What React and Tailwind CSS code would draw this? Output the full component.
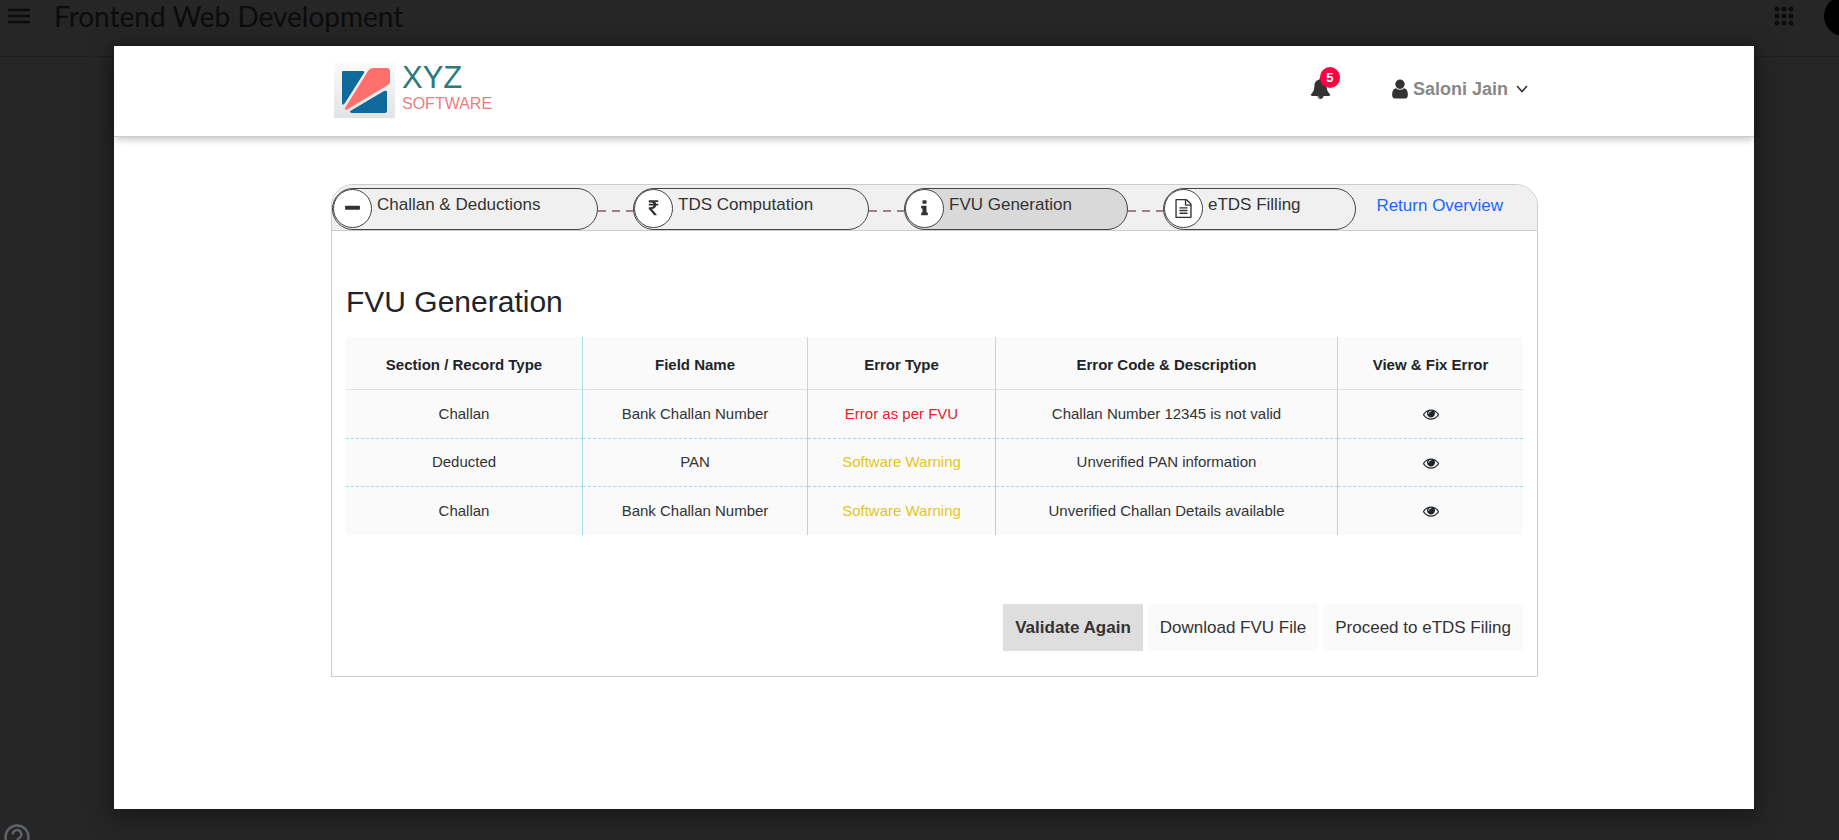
const ICONS = {
  eye: "M1664 960q-152-236-381-353 61 104 61 225 0 185-131.5 316.5t-316.5 131.5-316.5-131.5-131.5-316.5q0-121 61-225-229 117-381 353 133 205 333.5 326.5t434.5 121.5 434.5-121.5 333.5-326.5zm-720-384q0-20-14-34t-34-14q-125 0-214.5 89.5t-89.5 214.5q0 20 14 34t34 14 34-14 14-34q0-86 61-147t147-61q20 0 34-14t14-34zm848 384q0 34-20 69-140 230-376.5 368.5t-499.5 138.5-499.5-139-376.5-368q-20-35-20-69t20-69q140-229 376.5-368t499.5-139 499.5 139 376.5 368q20 35 20 69z",
  user: "M1536 1399q0 109-62.5 187t-150.5 78h-854q-88 0-150.5-78t-62.5-187q0-85 8.5-160.5t31.5-152 58.5-131 94-89 134.5-34.5q131 128 313 128t313-128q76 0 134.5 34.5t94 89 58.5 131 31.5 152 8.5 160.5zm-256-887q0 159-112.5 271.5t-271.5 112.5-271.5-112.5-112.5-271.5 112.5-271.5 271.5-112.5 271.5 112.5 112.5 271.5z",
  file: "M1596 380q28 28 48 76t20 88v1152q0 40-28 68t-68 28h-1344q-40 0-68-28t-28-68v-1600q0-40 28-68t68-28h896q40 0 88 20t76 48zm-444-244v376h376q-10-29-22-41l-313-313q-12-12-41-22zm384 1528v-1024h-416q-40 0-68-28t-28-68v-416h-768v1536h1280zm-1024-864q0-14 9-23t23-9h704q14 0 23 9t9 23v64q0 14-9 23t-23 9h-704q-14 0-23-9t-9-23v-64zm736 224q14 0 23 9t9 23v64q0 14-9 23t-23 9h-704q-14 0-23-9t-9-23v-64q0-14 9-23t23-9h704zm0 256q14 0 23 9t9 23v64q0 14-9 23t-23 9h-704q-14 0-23-9t-9-23v-64q0-14 9-23t23-9h704z",
  info: "M1216 1344v128q0 26-19 45t-45 19h-512q-26 0-45-19t-19-45v-128q0-26 19-45t45-19h64v-384h-64q-26 0-45-19t-19-45v-128q0-26 19-45t45-19h384q26 0 45 19t19 45v576h64q26 0 45 19t19 45zm-128-1152v192q0 26-19 45t-45 19h-256q-26 0-45-19t-19-45v-192q0-26 19-45t45-19h256q26 0 45 19t19 45z",
  rupee: "M1345 470v102q0 14-9 23t-23 9h-168q-23 144-129 234t-276 110q167 178 459 536 14 16 4 34-8 18-29 18h-195q-16 0-25-12-306-367-498-571-9-9-9-22v-127q0-13 9.5-22.5t22.5-9.5h112q132 0 212.5-43t102.5-125h-427q-14 0-23-9t-9-23v-102q0-14 9-23t23-9h413q-57-113-268-113h-145q-13 0-22.5-9.5t-9.5-22.5v-133q0-14 9-23t23-9h832q14 0 23 9t9 23v102q0 14-9 23t-23 9h-233q47 61 64 144h171q14 0 23 9t9 23z",
  minus: "M1600 736v192q0 40-28 68t-68 28h-1216q-40 0-68-28t-28-68v-192q0-40 28-68t68-28h1216q40 0 68 28t28 68z",
  bell: "M912 1696q0-16-16-16-59 0-101.5-42.5t-42.5-101.5q0-16-16-16t-16 16q0 73 51.5 124.5t124.5 51.5q16 0 16-16zm816-288q0 52-38 90t-90 38h-448q0 106-75 181t-181 75-181-75-75-181h-448q-52 0-90-38t-38-90q50-42 91-88t85-119.5 74.5-158.5 50-206 19.5-260q0-152 117-282.5t307-158.5q-8-19-8-39 0-40 28-68t68-28 68 28 28 68q0 20-8 39 190 28 307 158.5t117 282.5q0 139 19.5 260t50 206 74.5 158.5 85 119.5 91 88z",
};

function Icon({ name, className }) {
  return (
    <svg viewBox="0 0 1792 1792" fill="currentColor" aria-hidden="true" className={className}>
      <path d={ICONS[name]} />
    </svg>
  );
}

function Logo() {
  return (
    <a href="#home" className="flex items-start gap-[7px]">
      <svg viewBox="0 0 61 56" className="h-14 w-[61px]" aria-hidden="true">
        <defs>
          <linearGradient id="tile" x1="0" y1="0" x2="0" y2="1">
            <stop offset="0" stopColor="#fbfbfb" />
            <stop offset="1" stopColor="#e2e3e5" />
          </linearGradient>
        </defs>
        <rect width="61" height="56" fill="url(#tile)" />
        <path d="M9 9h20q2 0 1 2L11 41q-3 4-3-1V10q0-1 1-1z" fill="#0f6a9b" />
        <path d="M39 6h15l2 2v12q0 2-2 3L14 47q-4 2-3-1L34 9q2-3 5-3z" fill="#ff6f6b" />
        <path d="M50 29q3-1 3 1v19q0 2-2 2H18q-4-1 0-3z" fill="#0f6a9b" />
      </svg>
      <span className="flex flex-col pt-[2px]">
        <span className="text-[31px] leading-7 text-[#2c7a7d]">XYZ</span>
        <span className="pt-[2px] text-base leading-5 text-[#f07c80]">SOFTWARE</span>
      </span>
    </a>
  );
}

function Step({ icon, label, className }) {
  return (
    <li className={`flex h-[42px] shrink-0 rounded-full border border-[#444] ${className}`}>
      <button type="button" className="flex items-start gap-[5px]">
        <span className="flex h-[39px] w-[39px] items-center justify-center rounded-full border border-[#444] bg-white">
          <Icon name={icon} className="size-[19px]" />
        </span>
        <span className="pt-1 leading-6">{label}</span>
      </button>
    </li>
  );
}

function Connector() {
  return (
    <li aria-hidden="true" className="w-[35px] shrink-0 pt-1">
      <svg viewBox="0 0 35 2" className="h-[2px] w-[35px]">
        <path d="M0 1H35" stroke="#a08083" strokeWidth="2" strokeDasharray="8 6" />
      </svg>
    </li>
  );
}

const ROWS = [
  ["Challan", "Bank Challan Number", "Error as per FVU", "Challan Number 12345 is not valid"],
  ["Deducted", "PAN", "Software Warning", "Unverified PAN information"],
  ["Challan", "Bank Challan Number", "Software Warning", "Unverified Challan Details available"],
];

const HEADS = [
  ["Section / Record Type", "w-[237px]"],
  ["Field Name", "w-[225px]"],
  ["Error Type", "w-[188px]"],
  ["Error Code & Description", "w-[342px]"],
  ["View & Fix Error", "w-[185px]"],
];

export default function App() {
  return (
    <div className="relative h-screen overflow-hidden bg-[#262626] font-['Liberation_Sans',Arial,sans-serif] text-[#333]">
      <header className="flex h-[57px] items-start border-b border-[#1f1f1f] pl-2 text-[#0c0c0c]">
        <button type="button" aria-label="Main menu" className="pt-2">
          <svg viewBox="0 0 22 16" className="h-4 w-[22px]" stroke="currentColor" strokeWidth="2.4">
            <path d="M0 2H22M0 8H22M0 14H22" />
          </svg>
        </button>
        <h1 className="pl-6 font-['Lato',sans-serif] text-[28px] leading-8">Frontend Web Development</h1>
        <button type="button" aria-label="Apps" className="ml-auto pt-[6px]">
          <svg viewBox="0 0 20 20" className="h-5 w-5" fill="currentColor">
            {[3, 10, 17].map((y) => [3, 10, 17].map((x) => <circle key={`${x}-${y}`} cx={x} cy={y} r="2.5" />))}
          </svg>
        </button>
        <button type="button" aria-label="Account" className="-mt-1 -mr-[25px] ml-[30px] size-10 rounded-full bg-black" />
      </header>

      <button type="button" aria-label="Help" className="absolute top-[824px] left-1 text-[#5f6368]">
        <svg viewBox="0 0 26 26" className="size-[26px]" fill="none" stroke="currentColor" strokeWidth="2.4">
          <circle cx="13" cy="13" r="11.5" />
          <path d="M8.700 10.500a4.300 4.300 0 1 1 6.500 3.600c-1.500 1-2.200 1.700-2.200 3.400" />
        </svg>
      </button>

      <main role="dialog" aria-label="FVU Generation" className="absolute inset-x-0 top-[46px] mr-[85px] ml-[114px] h-[763px] bg-white shadow-[0_6px_24px_4px_rgba(0,0,0,0.35)]">
        <div className="flex h-[91px] items-start border-b border-[#ccc] pr-[226px] pl-[220px] pt-4 shadow-[0_2px_8px_rgba(0,0,0,0.25)]">
          <Logo />
          <button type="button" aria-label="5 notifications" className="relative mt-4 ml-auto">
            <Icon name="bell" className="size-[21px]" />
            <span className="absolute -top-[11px] left-[10px] flex h-[21px] w-5 items-center justify-center rounded-full bg-[#fa0540] text-[13px] font-bold text-white">5</span>
          </button>
          <button type="button" className="mt-[15px] ml-[58px] flex items-center text-lg leading-6 font-bold text-[#888]">
            <Icon name="user" className="size-[22px] text-[#333]" />
            <span className="px-[2px]">Saloni Jain</span>
            <svg viewBox="0 0 12 8" className="ml-[6px] h-2 w-3" fill="none" stroke="#333" strokeWidth="1.600">
              <path d="M1 1l5 5.500 5-5.500" />
            </svg>
          </button>
        </div>

        <section className="mt-[47px] mr-[216px] ml-[217px] rounded-t-[22px] border border-[#ccc]">
          <nav aria-label="Return steps" className="flex h-[46px] items-center rounded-t-[21px] border-b border-[#ccc] bg-[#f0f0f0] pt-[2px] text-[17px]">
            <ol className="flex items-center">
              <Step icon="minus" label="Challan & Deductions" className="w-[266px]" />
              <Connector />
              <Step icon="rupee" label="TDS Computation" className="w-[236px]" />
              <Connector />
              <Step icon="info" label="FVU Generation" className="w-[224px] bg-[#d9d9d9]" />
              <Connector />
              <Step icon="file" label="eTDS Filling" className="w-[193px]" />
            </ol>
            <a href="#overview" className="mr-[34px] mb-[6px] ml-auto text-[#1a66ff]">Return Overview</a>
          </nav>

          <div className="px-[14px] pt-[53px] pb-[25px]">
            <h2 className="text-[30px] leading-9 text-[#212529]">FVU Generation</h2>
            <table className="mt-[17px] w-full table-fixed border-separate border-spacing-0 bg-[#fafafa] text-center text-[15px]">
              <thead>
                <tr>
                  {HEADS.map(([text, width]) => (
                    <th key={text} scope="col" className={`h-[53px] border-r border-b border-r-[#ace0ee] border-b-[#dee2e6] pt-1 font-bold text-[#212529] last:border-r-0 ${width}`}>{text}</th>
                  ))}
                </tr>
              </thead>
              <tbody>
                {ROWS.map((row, i) => (
                  <tr key={i} className="group">
                    {row.map((cell, j) => (
                      <td key={j} className={`h-12 border-r border-b border-[#9fdcf0] [border-bottom-style:dashed] group-first:h-[49px] group-last:border-b-0 ${j === 2 ? (i === 0 ? "text-[#e8202a]" : "text-[#e3c51e]") : ""}`}>{cell}</td>
                    ))}
                    <td className="border-b border-dashed border-[#9fdcf0] group-last:border-b-0">
                      <button type="button" aria-label="View and fix error" className="mx-auto block text-[#212529]">
                        <Icon name="eye" className="size-4" />
                      </button>
                    </td>
                  </tr>
                ))}
              </tbody>
            </table>
            <div className="mt-[69px] flex justify-end gap-[5px] text-[17px]">
              <button type="button" className="h-[47px] bg-[#dedede] px-3 font-bold">Validate Again</button>
              <button type="button" className="h-[47px] bg-[#fafafa] px-3">Download FVU File</button>
              <button type="button" className="h-[47px] bg-[#fafafa] px-3">Proceed to eTDS Filing</button>
            </div>
          </div>
        </section>
      </main>
    </div>
  );
}
